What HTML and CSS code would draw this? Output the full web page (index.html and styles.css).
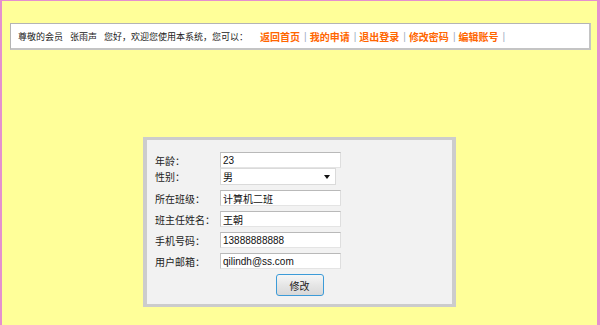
FILE: index.html
```html
<!DOCTYPE html>
<html lang="zh-CN">
<head>
  <meta charset="UTF-8" />
  <title>修改个人信息</title>
  <link rel="stylesheet" href="styles.css">
</head>
<body>
  <div class="topbar">
    <span class="greet">尊敬的会员</span><span class="greet">张雨声</span><span class="greet lead">您好，欢迎您使用本系统，您可以：</span>
    <a class="nav-link" href="#">返回首页</a><span class="sep">|</span>
    <a class="nav-link" href="#">我的申请</a><span class="sep">|</span>
    <a class="nav-link" href="#">退出登录</a><span class="sep">|</span>
    <a class="nav-link" href="#">修改密码</a><span class="sep">|</span>
    <a class="nav-link" href="#">编辑账号</a><span class="sep">|</span>
  </div>

  <form class="profile" id="profileForm">
    <div class="row first">
      <label for="age">年龄：</label>
      <input type="text" id="age" value="23" />
    </div>
    <div class="row tight">
      <label for="sex">性别：</label>
      <span class="select-wrap">
        <select id="sex">
          <option>男</option>
          <option>女</option>
        </select>
      </span>
    </div>
    <div class="row">
      <label for="cls">所在班级：</label>
      <input type="text" id="cls" value="计算机二班" />
    </div>
    <div class="row">
      <label for="teacher">班主任姓名：</label>
      <input type="text" id="teacher" value="王朝" />
    </div>
    <div class="row">
      <label for="phone">手机号码：</label>
      <input type="text" id="phone" value="13888888888" />
    </div>
    <div class="row">
      <label for="mail">用户邮箱：</label>
      <input type="text" id="mail" value="qilindh@ss.com" />
    </div>
    <div class="actions">
      <button type="submit">修改</button>
    </div>
  </form>
</body>
</html>
```

FILE: styles.css
```css
* {
  box-sizing: border-box;
}
html, body {
  height: 100%;
}
body {
  margin: 0;
  background: #ffff99;
  border-left: 2px solid #e590cf;
  border-top: 1px solid #e590cf;
  border-right: 3px solid #e590cf;
  font-family: "Noto Sans CJK SC", "Liberation Sans", sans-serif;
  color: #222;
  overflow: hidden;
}

/* top bar */
.topbar {
  margin: 22px 6px 0 8px;
  height: 27px;
  background: #fff;
  border: 1px solid #b4b4b4;
  border-right-width: 2px;
  border-bottom-width: 2px;
  border-right-color: #c4c4c4;
  border-bottom-color: #c4c4c4;
  padding-left: 7px;
  display: flex;
  align-items: center;
  font-size: 9px;
  white-space: nowrap;
}
.greet {
  margin-right: 7px;
}
.greet.lead {
  margin-right: 12px;
}
.nav-link {
  color: #ff6600;
  font-weight: bold;
  font-size: 10px;
  text-decoration: none;
}
.sep {
  font-family: "Liberation Sans", sans-serif;
  font-size: 10px;
  color: #9fb0c4;
  margin: 0 3px 0 4px;
}

/* form box */
.profile {
  width: 313px;
  height: 170px;
  margin: 87px auto 0;
  background: #f2f2f2;
  border: solid #cccccc;
  border-width: 3px 4px;
  padding: 12px 0 0 8px;
  font-size: 10px;
}
.row {
  display: grid;
  grid-template-columns: 65px 121px;
  align-items: center;
  margin-top: 5px;
}
.row.first {
  margin-top: 0;
}
.row.tight {
  margin-top: 0;
}
.row label {
  color: #222;
}
.row input {
  height: 16px;
  width: 121px;
  border: 1px solid;
  border-color: #b9b9b9 #dedede #e4e4e4 #c6c6c6;
  background: #fff;
  padding: 0 2px;
  font-family: "Liberation Sans", "Noto Sans CJK SC", sans-serif;
  font-size: 10px;
  color: #111;
  outline: none;
}
.select-wrap {
  position: relative;
  display: block;
  width: 116px;
}
.select-wrap select {
  appearance: none;
  -webkit-appearance: none;
  width: 116px;
  height: 17px;
  border: 1px solid #dadada;
  background: #fff;
  padding: 0 2px;
  font-family: "Noto Sans CJK SC", sans-serif;
  font-size: 10px;
  color: #111;
  outline: none;
}
.select-wrap::after {
  content: "";
  position: absolute;
  right: 6px;
  top: 7px;
  border-top: 4px solid #111;
  border-left: 3px solid transparent;
  border-right: 3px solid transparent;
}
.actions {
  display: flex;
  justify-content: center;
  padding-right: 8px;
  margin-top: 5px;
}
.actions button {
  width: 48px;
  height: 22px;
  border: 1px solid #3c9bd8;
  border-radius: 3px;
  background: linear-gradient(#f6f6f6, #e6e6e6 50%, #d8d8d8);
  font-family: "Noto Sans CJK SC", sans-serif;
  font-size: 10px;
  color: #222;
  cursor: pointer;
}
```
